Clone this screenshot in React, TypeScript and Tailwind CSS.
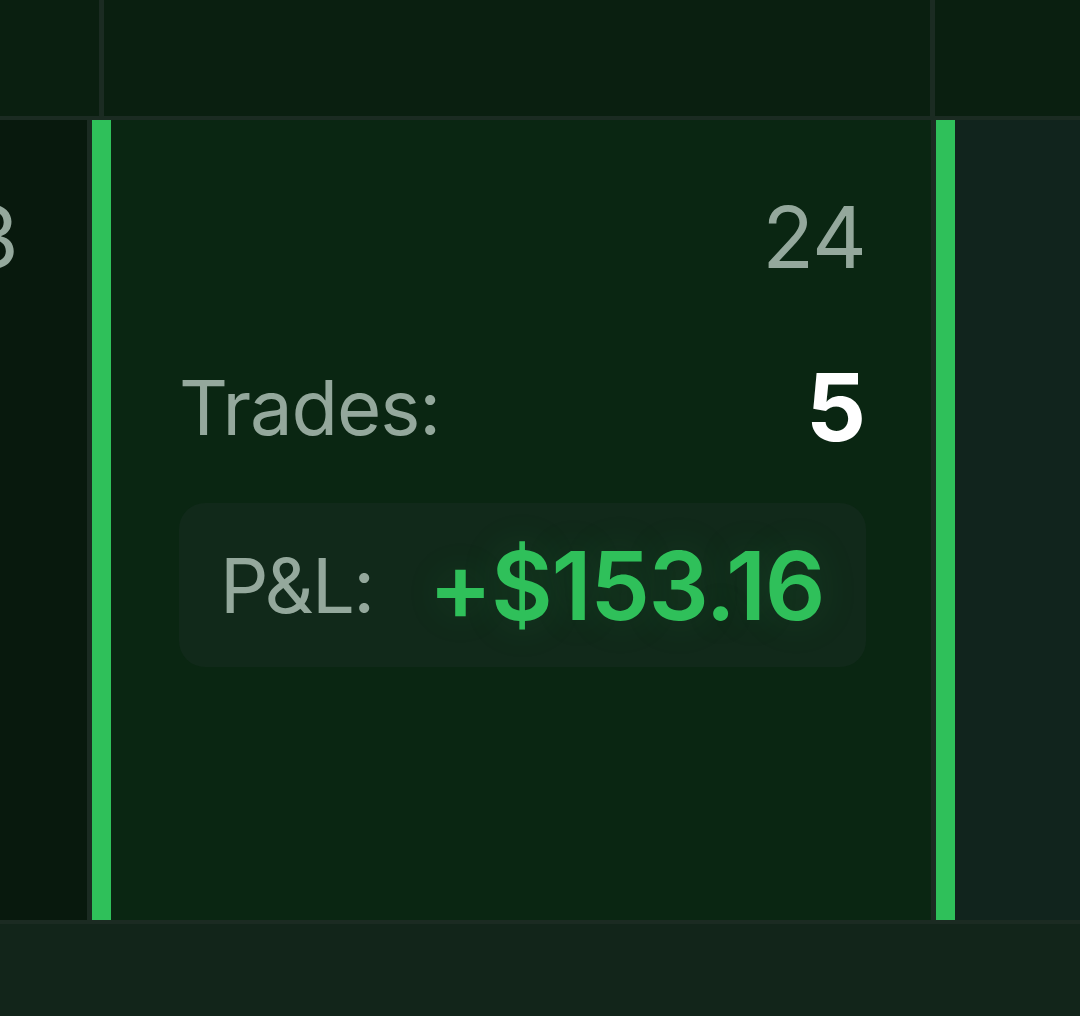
export default function App() {
  const font = { fontFamily: "Inter, 'Noto Sans', sans-serif" };
  return (
    <div className="w-[1080px] h-[1016px] overflow-hidden bg-[#1b2b22] flex flex-col gap-[4px]" style={font}>
      {/* header row */}
      <div className="h-[116px] flex gap-[5px] shrink-0">
        <div className="w-[99px] bg-[#0a1f10]" />
        <div className="w-[826px] bg-[#0a1f10]" />
        <div className="flex-1 bg-[#0a1f10]" />
      </div>

      {/* week row */}
      <div className="h-[800px] flex gap-[5px] shrink-0">
        <div className="w-[87px] bg-[#08190d] flex justify-end overflow-hidden pt-[75px] pr-[69px]">
          <span className="text-[85px] leading-none tracking-[-0.01em] text-[#94a89c] whitespace-nowrap">23</span>
        </div>

        <div className="w-[839px] bg-[#0a2612] border-l-[19px] border-[#2fc05a] flex flex-col pl-[68px] pr-[65px] pt-[75px]">
          <div className="flex justify-end">
            <span className="text-[85px] leading-none tracking-[-0.01em] text-[#94a89c]">24</span>
          </div>
          <div className="mt-[80px] flex items-center justify-between h-[94px]">
            <span className="text-[76px] leading-none tracking-[-0.015em] text-[#94a89c]">Trades:</span>
            <span className="text-[94px] leading-none font-bold text-white">5</span>
          </div>
          <div className="mt-[49px] h-[164px] rounded-[26px] bg-[#11291a] flex items-center justify-between pl-[41px] pr-[42px]">
            <span className="text-[76px] leading-none tracking-[-0.02em] text-[#94a89c]">P&amp;L:</span>
            <span className="text-[95px] leading-none font-semibold tracking-[-0.015em] text-[#2fc05a] [text-shadow:0_0_40px_rgba(47,192,90,0.15)]">
              +$153.16
            </span>
          </div>
        </div>

        <div className="flex-1 bg-[#11241d] border-l-[19px] border-[#2fc05a]" />
      </div>

      {/* next row */}
      <div className="flex-1 bg-[#12251a]" />
    </div>
  );
}
